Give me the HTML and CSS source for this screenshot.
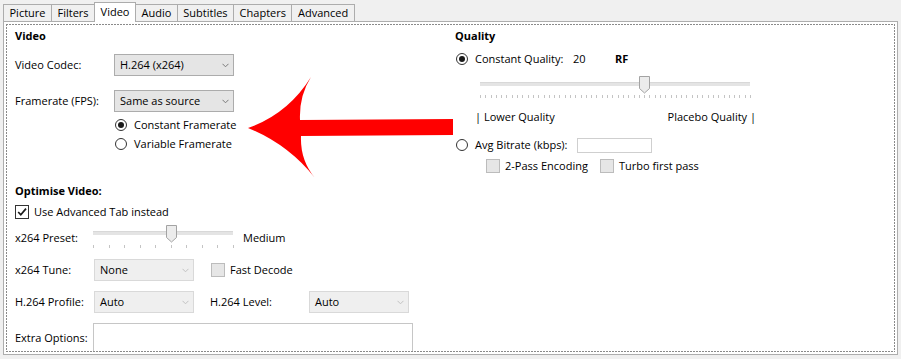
FILE: index.html
```html
<!DOCTYPE html>
<html lang="en">
<head>
    <meta charset="UTF-8">
    <title>Video Settings</title>
    <link rel="stylesheet" href="styles.css">
</head>
<body>
    <div class="tabs">
        <div class="tab">Picture</div>
        <div class="tab">Filters</div>
        <div class="tab active">Video</div>
        <div class="tab">Audio</div>
        <div class="tab">Subtitles</div>
        <div class="tab">Chapters</div>
        <div class="tab">Advanced</div>
    </div>

    <div class="panel">
        <div class="frame">
            <div class="top">
                <div class="video-col">
                    <div class="heading">Video</div>
                    <div class="row r-codec">
                        <span class="lbl lbl-video">Video Codec:</span>
                        <div class="combo combo-wide">
                            <span>H.264 (x264)</span>
                            <svg class="chev" width="7" height="5" viewBox="0 0 7 5"><polyline points="0.5,0.8 3.5,3.8 6.5,0.8" /></svg>
                        </div>
                    </div>
                    <div class="row r-fps">
                        <span class="lbl lbl-video">Framerate (FPS):</span>
                        <div class="combo combo-wide">
                            <span>Same as source</span>
                            <svg class="chev" width="7" height="5" viewBox="0 0 7 5"><polyline points="0.5,0.8 3.5,3.8 6.5,0.8" /></svg>
                        </div>
                    </div>
                    <div class="row opt-row fr-first">
                        <span class="radio on"></span>
                        <span>Constant Framerate</span>
                    </div>
                    <div class="row opt-row fr-second">
                        <span class="radio"></span>
                        <span>Variable Framerate</span>
                    </div>
                </div>

                <div class="quality-col">
                    <div class="heading">Quality</div>
                    <div class="row q-row cq-row">
                        <span class="radio on"></span>
                        <span class="lbl lbl-cq">Constant Quality:</span>
                        <span class="rf-value">20</span>
                        <span class="bold">RF</span>
                    </div>
                    <div class="slider slider-q">
                        <div class="track"></div>
                        <div class="ticks"></div>
                        <svg class="thumb" width="11" height="18" viewBox="0 0 11 18"><path d="M0.5 0.5 H10.5 V12.5 L5.5 17 L0.5 12.5 Z" /></svg>
                    </div>
                    <div class="row scale-labels">
                        <span>| Lower Quality</span>
                        <span>Placebo Quality |</span>
                    </div>
                    <div class="row q-row avg-row">
                        <span class="radio"></span>
                        <span class="lbl lbl-avg">Avg Bitrate (kbps):</span>
                        <div class="field"></div>
                    </div>
                    <div class="row pass-row">
                        <label class="check-item pass-item"><span class="check dim"></span>2-Pass Encoding</label>
                        <label class="check-item"><span class="check dim"></span>Turbo first pass</label>
                    </div>
                </div>
            </div>

            <div class="optimise">
                <div class="heading">Optimise Video:</div>
                <label class="row check-item adv-row">
                    <span class="check">
                        <svg width="12" height="12" viewBox="0 0 12 12"><polyline points="2.2,6 4.8,8.8 10,2.6" /></svg>
                    </span>
                    Use Advanced Tab instead
                </label>
                <div class="row preset-row">
                    <span class="lbl lbl-opt">x264 Preset:</span>
                    <div class="slider slider-p">
                        <div class="track"></div>
                        <div class="ticks"></div>
                        <svg class="thumb" width="11" height="18" viewBox="0 0 11 18"><path d="M0.5 0.5 H10.5 V12.5 L5.5 17 L0.5 12.5 Z" /></svg>
                    </div>
                    <span class="preset-name">Medium</span>
                </div>
                <div class="row opt-line tune-row">
                    <span class="lbl lbl-opt2">x264 Tune:</span>
                    <div class="combo combo-small disabled">
                        <span>None</span>
                        <svg class="chev" width="7" height="5" viewBox="0 0 7 5"><polyline points="0.5,0.8 3.5,3.8 6.5,0.8" /></svg>
                    </div>
                    <label class="check-item fast-decode"><span class="check dim"></span>Fast Decode</label>
                </div>
                <div class="row opt-line">
                    <span class="lbl lbl-opt2">H.264 Profile:</span>
                    <div class="combo combo-small disabled">
                        <span>Auto</span>
                        <svg class="chev" width="7" height="5" viewBox="0 0 7 5"><polyline points="0.5,0.8 3.5,3.8 6.5,0.8" /></svg>
                    </div>
                    <span class="lbl lbl-level">H.264 Level:</span>
                    <div class="combo combo-small disabled">
                        <span>Auto</span>
                        <svg class="chev" width="7" height="5" viewBox="0 0 7 5"><polyline points="0.5,0.8 3.5,3.8 6.5,0.8" /></svg>
                    </div>
                </div>
                <div class="row extra-row">
                    <span class="lbl lbl-opt">Extra Options:</span>
                    <div class="textbox"></div>
                </div>
            </div>
        </div>
    </div>

    <!-- red pointer drawn over the form -->
    <svg class="arrow" width="901" height="359" viewBox="0 0 901 359">
        <path d="M248 128 Q288 114 311 77 Q299 96 300 120 L453 119 L453 135 L301 136 Q300 160 315 178 Q288 144 248 128 Z" />
    </svg>
</body>
</html>
```

FILE: styles.css
```css
body {
    margin: 0;
    padding: 2px 3px 0;
    height: 359px;
    box-sizing: border-box;
    overflow: hidden;
    position: relative;
    background: #f0f0f0;
    font-family: "Open Sans", sans-serif;
    font-size: 11px;
    color: #000;
}

/* tab strip */
.tabs {
    display: flex;
    align-items: flex-end;
    height: 19px;
    position: relative;
    z-index: 1;
}
.tab {
    height: 17px;
    box-sizing: border-box;
    padding: 0 5.5px;
    border: 1px solid #acacac;
    border-bottom: none;
    margin-right: -1px;
    background: #f0f0f0;
    line-height: 16px;
}
.tab.active {
    height: 20px;
    margin-bottom: -1px;
    background: #fff;
    line-height: 18px;
}

.panel {
    width: 895px;
    height: 334px;
    box-sizing: border-box;
    border: 1px solid #adadad;
    background: #fff;
    padding: 2px;
}
.frame {
    height: 100%;
    box-sizing: border-box;
    padding: 4px 9px 0;
    position: relative;
    overflow: hidden;
}
.frame::after {
    content: "";
    position: absolute;
    inset: 0;
    pointer-events: none;
    background:
        repeating-linear-gradient(90deg, #8a8a8a 0 2px, transparent 2px 3px) top / 100% 1px no-repeat,
        repeating-linear-gradient(90deg, #8a8a8a 0 2px, transparent 2px 3px) bottom / 100% 1px no-repeat,
        repeating-linear-gradient(180deg, #8a8a8a 0 2px, transparent 2px 3px) left / 1px 100% no-repeat,
        repeating-linear-gradient(180deg, #8a8a8a 0 2px, transparent 2px 3px) right / 1px 100% no-repeat;
}

.top {
    display: flex;
}
.video-col {
    width: 440px;
}
.quality-col {
    flex: 1;
}

.heading {
    font-weight: 700;
    line-height: 16px;
}
.bold {
    font-weight: 700;
}
.row {
    display: flex;
    align-items: center;
    line-height: 16px;
}
.lbl {
    flex: none;
}

/* video section */
.r-codec {
    height: 22px;
    margin-top: 10px;
}
.r-fps {
    height: 22px;
    margin-top: 14px;
}
.lbl-video {
    width: 99px;
}
.opt-row {
    margin-left: 100px;
    gap: 7px;
}
.fr-first {
    margin-top: 5px;
}
.fr-second {
    margin-top: 3px;
}

/* combo boxes */
.combo {
    height: 22px;
    box-sizing: border-box;
    border: 1px solid #acacac;
    background: #e5e5e5;
    display: flex;
    align-items: center;
    justify-content: space-between;
    padding: 0 4px 0 5px;
}
.combo-wide {
    width: 120px;
}
.combo-small {
    width: 100px;
}
.combo.disabled {
    background: #efefef;
    border-color: #d9d9d9;
}
.chev {
    fill: none;
    stroke: #7a7a7a;
    stroke-width: 1;
}
.disabled .chev {
    stroke: #c2c2c2;
}

/* radios and checks */
.radio {
    width: 12px;
    height: 12px;
    box-sizing: border-box;
    border: 1px solid #333;
    border-radius: 50%;
    background: #fff;
    display: flex;
    align-items: center;
    justify-content: center;
    flex: none;
}
.radio.on::after {
    content: "";
    width: 6px;
    height: 6px;
    border-radius: 50%;
    background: #1a1a1a;
}
.check-item {
    display: flex;
    align-items: center;
    gap: 5px;
    line-height: 16px;
}
.check {
    width: 14px;
    height: 14px;
    box-sizing: border-box;
    border: 1px solid #333;
    background: #fff;
    flex: none;
    display: flex;
    align-items: center;
    justify-content: center;
}
.check svg {
    fill: none;
    stroke: #1a1a1a;
    stroke-width: 1.7;
}
.check.dim {
    background: #e6e6e6;
    border-color: #bcbcbc;
}

/* quality section */
.q-row {
    margin-left: 1px;
    gap: 7px;
}
.cq-row {
    margin-top: 7px;
}
.lbl-cq {
    width: 91px;
}
.rf-value {
    width: 35px;
}
.scale-labels {
    margin-top: 9px;
    margin-left: 20px;
    width: 281px;
    justify-content: space-between;
}
.avg-row {
    margin-top: 12px;
}
.lbl-avg {
    width: 95px;
}
.field {
    width: 75px;
    height: 15px;
    box-sizing: border-box;
    border: 1px solid #cfcfcf;
    background: #fff;
}
.pass-row {
    margin-top: 5px;
    margin-left: 31px;
}
.pass-item {
    width: 114px;
}

/* sliders */
.slider {
    position: relative;
    flex: none;
}
.track {
    position: absolute;
    left: 0;
    right: 0;
    height: 4px;
    background: #e4e4e4;
    border-top: 1px solid #d8d8d8;
    box-sizing: border-box;
}
.ticks {
    position: absolute;
    left: 0;
    height: 3px;
}
.thumb {
    position: absolute;
    fill: #ececec;
    stroke: #a3a3a3;
}
.slider-q {
    width: 270px;
    height: 24px;
    margin-top: 9px;
    margin-left: 25px;
}
.slider-q .track {
    top: 6px;
}
.slider-q .thumb {
    top: 0;
    left: 159px;
}
.slider-q .ticks {
    top: 19px;
    width: 271px;
    background: repeating-linear-gradient(90deg, #c4c4c4 0 1px, transparent 1px 5.294px);
}
.slider-p {
    width: 140px;
    height: 28px;
}
.slider-p .track {
    top: 9px;
}
.slider-p .thumb {
    top: 3px;
    left: 73px;
}
.slider-p .ticks {
    top: 23px;
    width: 141px;
    background: repeating-linear-gradient(90deg, #c4c4c4 0 1px, transparent 1px 15.556px);
}

/* optimise section */
.optimise .heading {
    margin-top: 9px;
}
.adv-row {
    margin-top: 5px;
}
.preset-row {
    margin-top: 2px;
    align-items: flex-start;
}
.preset-row .lbl,
.preset-name {
    margin-top: 8px;
}
.lbl-opt {
    width: 78px;
}
.lbl-opt2 {
    width: 79px;
}
.preset-name {
    margin-left: 10px;
}
.opt-line {
    height: 22px;
    margin-top: 10px;
}
.tune-row {
    margin-top: 9px;
}
.fast-decode {
    margin-left: 17px;
}
.lbl-level {
    width: 99px;
    margin-left: 16px;
}
.extra-row {
    margin-top: 10px;
    align-items: flex-start;
}
.extra-row .lbl {
    margin-top: 7px;
}
.textbox {
    width: 320px;
    height: 40px;
    box-sizing: border-box;
    border: 1px solid #c6c6c6;
    background: #fff;
}

.arrow {
    position: absolute;
    left: 0;
    top: 0;
    pointer-events: none;
    fill: #ff0000;
}
```
